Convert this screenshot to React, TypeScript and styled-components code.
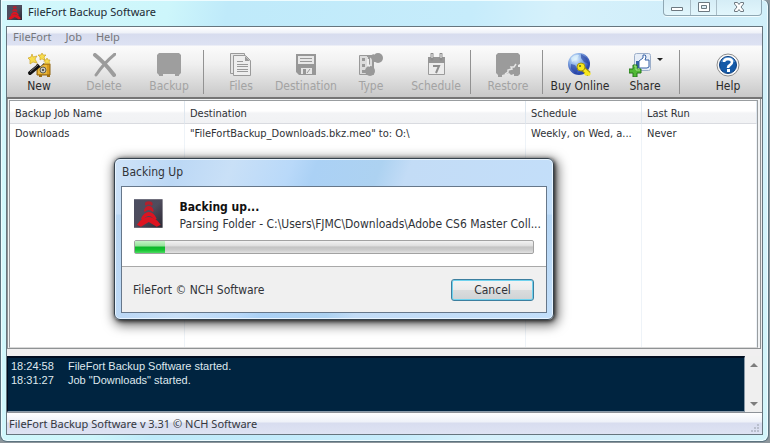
import React from 'react';
import styled, { createGlobalStyle } from 'styled-components';

const tahoma = `Tahoma, "DejaVu Sans Condensed", "Noto Sans", sans-serif`;
const segoe = `"Segoe UI", "Noto Sans", "Open Sans", sans-serif`;
const arial = `"Liberation Sans", Arial, sans-serif`;

const GlobalStyle = createGlobalStyle`
  *, *::before, *::after { box-sizing: border-box; }
  body { margin: 0; background: #8d969c; }
  button { font: inherit; color: inherit; border: 0; padding: 0; background: none; }
  svg { display: block; }
`;

const Window = styled.main`
  position: relative;
  display: flex;
  flex-direction: column;
  height: calc(100vh - 1px);
  margin-right: 1px;
  padding: 0 5px 6px;
  overflow: hidden;
  border: 1px solid #5d7480;
  border-top: 0;
  border-radius: 0 6px 7px 7px;
  box-shadow: inset 0 0 0 1px #eefcff;
  background: linear-gradient(100deg, #d3f8fc 0%, #cdf6fb 20%, #bfeafa 27%, #c6ecfb 56%, #d6f1fb 66%, #cfedfa 85%, #d3f5fa 100%);
`;

const TitleBar = styled.header`
  display: flex;
  flex: none;
  align-items: flex-start;
  height: 26px;
  padding: 0 1px 0 1px;
  font: 11px/24px ${segoe};
  color: #1d2a33;
`;

const Title = styled.h1`
  flex: 1;
  margin: 0 0 0 6px;
  font: inherit;
`;

const LogoSlot = styled.span`
  flex: none;
  margin-top: 5px;
`;

const WindowButtons = styled.div`
  display: flex;
  height: 16px;
  border: 1px solid #8fa7b3;
  border-top: 0;
  border-radius: 0 0 4px 4px;
  background: linear-gradient(#d5edf6, #e2f6fc);
  box-shadow: 0 1px 0 #f2fdff;
`;

const WindowButton = styled.button<{ $wide?: boolean }>`
  display: flex;
  justify-content: center;
  align-items: flex-start;
  width: ${p => (p.$wide ? 45 : 26)}px;
  & + & { border-left: 1px solid #a9bdc7; }
`;

const Client = styled.div`
  display: flex;
  flex: 1;
  flex-direction: column;
  min-height: 0;
  border: 1px solid #66757e;
  background: #f0eff0;
`;

const MenuBar = styled.nav`
  display: flex;
  flex: none;
  gap: 14px;
  height: 19px;
  padding-left: 6px;
  border-bottom: 1px solid #eceef6;
  background: linear-gradient(#ffffff 0, #eef1f8 6px, #d7dcee 7px, #dde2f3 100%);
  font: 11px/19px ${segoe};
  color: #75777c;
`;

const ToolBar = styled.div`
  display: flex;
  flex: none;
  height: 53px;
  padding-right: 1px;
  border-bottom: 2px solid #757575;
  background: linear-gradient(#fbfbfb, #f0f0f0 35%, #c8c8c8);
  font: 12px/14px ${tahoma};
`;

const Tool = styled.button<{ $last?: boolean }>`
  position: relative;
  display: flex;
  flex: none;
  flex-direction: column;
  align-items: center;
  gap: 2px;
  width: 65px;
  padding: 7px 1px 0 0;
  margin-left: ${p => (p.$last ? 'auto' : 0)};
  white-space: nowrap;
  color: #2b2b2b;
  &:disabled { color: #a3a3a3; }
`;

const ToolRule = styled.span`
  flex: none;
  width: 1px;
  height: 44px;
  margin: 4px 5px 0 1px;
  background: #929292;
`;

const DropArrow = styled.span`
  position: absolute;
  top: 12px;
  right: 15px;
  border: 3px solid transparent;
  border-top-color: #222;
  border-bottom: 0;
`;

const ListFrame = styled.section`
  flex: 1;
  min-height: 0;
  margin: 0 1px 0 0;
  padding: 1px 2px 0 1px;
  border: 1px solid #8f9294;
  border-top: 0;
  background: #f1f3f4;
`;

const JobTable = styled.table`
  width: 100%;
  height: 100%;
  border: 1px solid #999da0;
  border-bottom-color: #d8d8d8;
  border-collapse: separate;
  border-spacing: 0;
  table-layout: fixed;
  background: #fff;
  font: 11px/14px ${tahoma};
  color: #2f3236;
  th, td {
    overflow: hidden;
    padding: 0 5px;
    border-right: 1px solid #eef3f8;
    font-weight: normal;
    text-align: left;
    text-overflow: ellipsis;
    white-space: nowrap;
  }
  th {
    height: 23px;
    padding-top: 3px;
    border-right-color: #dfe7ef;
    border-bottom: 1px solid #d9dbe0;
    background: linear-gradient(#fff 45%, #f3f4f6 55%, #f1f2f4);
  }
`;

const Col = styled.col<{ $width?: number }>`
  width: ${p => (p.$width ? `${p.$width}px` : 'auto')};
`;

const JobRow = styled.tr`
  height: 20px;
`;

const LogPane = styled.section`
  display: flex;
  flex: none;
  height: 57px;
  margin-top: 7px;
  border-bottom: 1px solid #8d9298;
`;

const LogLines = styled.ol`
  flex: 1;
  margin: 0;
  padding: 1px 3px;
  border: 1px solid #000d20;
  border-top-width: 2px;
  border-bottom: 1px solid #8a9aa8;
  border-right-color: #8a9aa8;
  background: #002440;
  font: 11px/14px ${arial};
  color: #dfe8ee;
  list-style: none;
`;

const LogLine = styled.li`
  display: flex;
`;

const LogTime = styled.time`
  width: 57px;
`;

const ScrollBar = styled.div`
  display: flex;
  flex-direction: column;
  justify-content: space-between;
  width: 17px;
  padding: 7px 4px 6px 5px;
  background: #efefef;
`;

const ScrollButton = styled.button<{ $down?: boolean }>`
  width: 8px;
  height: 4px;
  border: 4px solid transparent;
  ${p => (p.$down ? 'border-top-color: #7d7d7d; border-bottom: 0;' : 'border-bottom-color: #7d7d7d; border-top: 0;')}
`;

const StatusBar = styled.footer`
  display: flex;
  flex: none;
  align-items: flex-end;
  justify-content: space-between;
  height: 21px;
  padding: 0 2px 1px;
  background: linear-gradient(#fff, #eef1f8 9px, #d8ddef 10px, #dee3f3);
  font: 11px/18px ${segoe};
  color: #35383e;
`;

const Dialog = styled.section`
  position: absolute;
  top: 158px;
  left: 113px;
  width: 440px;
  padding: 0 6px 6px;
  border: 1px solid #35424d;
  border-radius: 6px;
  background:
    linear-gradient(#ffffff00 55px, #8ebde644 56px, #ffffff00),
    linear-gradient(110deg, #cfe3f8 0%, #bcd8f5 13%, #c9e0f7 24%, #b9d9f9 36%, #abd1f5 41%, #add2f1 54%, #c3dcf6 60%, #c3dffa 100%);
  box-shadow: inset 0 0 0 1px #e8f4ff, 1px 1px 4px #000c, 2px 3px 12px 2px #0009;
  font: 12px/16px ${tahoma};
  color: #303338;
`;

const DialogTitle = styled.h2`
  height: 27px;
  margin: 0;
  padding-left: 1px;
  font: 12px/27px ${tahoma};
`;

const DialogBody = styled.div`
  border: 1px solid #66778a;
  background: #fff;
`;

const DialogMain = styled.div`
  padding: 12px 10px 12px 12px;
  border-bottom: 1px solid #a9a9a9;
`;

const Message = styled.div`
  display: flex;
  gap: 17px;
  margin-bottom: 7px;
`;

const MessageText = styled.div`
  min-width: 0;
  font: 12px/17px ${tahoma};
  white-space: nowrap;
`;

const MessageTitle = styled.strong`
  display: block;
  color: #111;
`;

const ProgressTrack = styled.div`
  height: 14px;
  margin-right: 2px;
  border: 1px solid #a2a2a2;
  border-radius: 2px;
  background: linear-gradient(#f2f2f2, #dfdfdf 40%, #c3c3c3 50%, #cdcdcd 75%, #e2e2e2);
`;

const ProgressFill = styled.div`
  height: 100%;
  background: linear-gradient(#c4f3c8, #93e398 42%, #0db52a 50%, #14c330 75%, #4ddb62);
`;

const DialogFooter = styled.div`
  display: flex;
  align-items: center;
  justify-content: space-between;
  height: 45px;
  padding: 0 12px 0 11px;
  background: #f0f0f0;
`;

const CancelButton = styled.button`
  width: 83px;
  height: 22px;
  border: 1px solid #3c7f9f;
  border-radius: 3px;
  background: linear-gradient(#f3f3f3, #ebebeb 48%, #dadcdd 52%, #cfd3d5);
  box-shadow: inset 0 0 0 1px #6fd2ee;
`;

const Logo = ({ size }: { size: number }) => (
  <svg width={size} height={size} viewBox="0 0 29 29" aria-hidden="true">
    <defs>
      <linearGradient id="logoBack" x2="1" y2="1">
        <stop stopColor="#4b4e62" />
        <stop offset=".5" stopColor="#4f4c5c" />
        <stop offset="1" stopColor="#2a2833" />
      </linearGradient>
    </defs>
    <path d="M0 0h29v29H0z" fill="url(#logoBack)" />
    <g fill="#dd1420">
      <path d="M11 5q0-3 4-3t4 3l-1 2q-3-3-6 0z" fill="#b3202c" />
      <path d="M10 12q1-5 5-5t5 5l-1 1q-4-4-8 0z" fill="#c71a26" />
      <path d="M7 20q3-7 8-7t8 7l-2 1q-3-4-6-4t-6 4z" />
      <path d="M3 26l3-4q5-4 9-4t9 4l3 4-4 2-8-5-8 5z" />
    </g>
  </svg>
);

const NewIcon = () => (
  <svg width="24" height="24" viewBox="0 0 24 24" aria-hidden="true">
    <path d="M10 11h13v11H10z" fill="#d99b1c" stroke="#8d630e" />
    <path d="M11 12h9v9h-9z" fill="#e9b83c" />
    <path d="M12 22h3v2h-3zM20 22h3v2h-3z" fill="#9a6c12" />
    <circle cx="16" cy="17" r="3" fill="#c9c9bd" stroke="#5d5c54" />
    <circle cx="16" cy="17" r="1" fill="#333" />
    <path d="M5 1l1 3 4-1-2 3 2 4-4-1-3 2V7L1 5l3-1z" fill="#f8dd4e" stroke="#cda526" strokeWidth=".7" />
    <path d="M15 0l1 2 3 0-2 2 1 3-3-1-2 1V4l-2-2h3z" fill="#f8dd4e" stroke="#cda526" strokeWidth=".7" />
    <path d="M20 5l1 2h2l-1 2 1 2-3-1-2 1V9l-1-2h2z" fill="#f8dd4e" stroke="#cda526" strokeWidth=".7" />
    <path d="M3 20L15 10" stroke="#111" strokeWidth="4" strokeLinecap="round" />
    <path d="M12 12l4-4" stroke="#f4f4f4" strokeWidth="4" />
    <path d="M3 19l8-7" stroke="#777" />
  </svg>
);

const DeleteIcon = () => (
  <svg width="24" height="24" viewBox="0 0 24 24" aria-hidden="true">
    <path d="M3 2q9 7 19 20" stroke="#9c9c9c" strokeWidth="4" fill="none" strokeLinecap="round" />
    <path d="M23 1Q12 10 4 22" stroke="#9c9c9c" strokeWidth="3" fill="none" strokeLinecap="round" />
  </svg>
);

const BackupIcon = () => (
  <svg width="24" height="24" viewBox="0 0 24 24" aria-hidden="true">
    <path d="M2 0h20l2 2v18l-2 2v1h-4v-2H6v2H2v-1l-2-2V2z" fill="#9e9e9e" />
  </svg>
);

const FilesIcon = () => (
  <svg width="24" height="24" viewBox="0 0 24 24" aria-hidden="true">
    <path d="M4.500 20.500h-3v-20h14v2" fill="#e5e5e5" stroke="#9a9a9a" />
    <path d="M4.500 2.500h12l5 5v15h-17z" fill="#eee" stroke="#9a9a9a" />
    <path d="M16 3l5 5h-5z" fill="#9a9a9a" />
    <path d="M8 8.500h6M8 11.500h11M8 13.500h11M8 16.500h11M8 18.500h11" stroke="#9a9a9a" />
  </svg>
);

const DestinationIcon = () => (
  <svg width="24" height="24" viewBox="0 0 24 24" aria-hidden="true">
    <path d="M2 1h20v21H5l-3-3z" fill="#979797" />
    <path d="M4 3h16v8H4z" fill="#e7e7e7" />
    <path d="M6 5.500h12M6 8.500h12" stroke="#999" />
    <path d="M7 15h11v6H7z" fill="#e5e5e5" />
    <path d="M9 16h3v5H9z" fill="#979797" />
    <path d="M13 20l3-4" stroke="#979797" />
  </svg>
);

const TypeIcon = () => (
  <svg width="24" height="24" viewBox="0 0 24 24" aria-hidden="true">
    <path d="M.5 2.500h14v19H.5z" fill="#dcdcdc" stroke="#999" />
    <path d="M3 5h3v3H3zM3 11h3v3H3zM3 17h4v3H3z" fill="#999" />
    <path d="M8 3h2v10M11 4l4-2" stroke="#999" strokeWidth="2" fill="none" />
    <path d="M11 3l9 1v4l-5 1v9h-2V7z" fill="#999" />
    <circle cx="19" cy="5" r="5" fill="#999" />
    <circle cx="11" cy="18" r="5" fill="#999" />
    <path d="M9 6v6l2 1" stroke="#eee" strokeWidth="2" fill="none" />
  </svg>
);

const ScheduleIcon = () => (
  <svg width="24" height="24" viewBox="0 0 24 24" aria-hidden="true">
    <path d="M4.500 5.500h16v16h-16z" fill="#ececec" stroke="#9b9b9b" />
    <path d="M4 4h17v6H4z" fill="#969696" />
    <path d="M8 1v5M17 1v5" stroke="#8d8d8d" strokeWidth="3" strokeLinecap="round" />
    <path d="M8 1v4M17 1v4" stroke="#eee" />
    <path d="M9 13h6l-3 7" stroke="#8d8d8d" strokeWidth="2" fill="none" />
  </svg>
);

const RestoreIcon = () => (
  <svg width="24" height="24" viewBox="0 0 24 24" aria-hidden="true">
    <path d="M2 0h20l2 2v9l-2 1v2h2v7l-2 2h-4v-2l-3 1-2-2-7 2v2H2v-2l-2-2V2z" fill="#9b9b9b" />
    <path d="M20 11l-2 3h-3l1 2-4 1v2l-3 2" stroke="#e6e6e6" fill="none" strokeWidth="1.500" />
  </svg>
);

const BuyIcon = () => (
  <svg width="24" height="24" viewBox="0 0 24 24" aria-hidden="true">
    <defs>
      <radialGradient id="globe" cx=".35" cy=".28" r=".65">
        <stop stopColor="#e6f6ff" />
        <stop offset=".45" stopColor="#8db2e8" />
        <stop offset="1" stopColor="#2a49ae" />
      </radialGradient>
    </defs>
    <circle cx="11" cy="11" r="11" fill="url(#globe)" />
    <path d="M13 1l6 4 2 6-5-2-3-4zM3 11l4 1 3 5-2 4-5-5z" fill="#243f9e" opacity=".6" />
    <path d="M3 5q4-4 8-3l-2 4-5 3z" fill="#dff4fb" opacity=".7" />
    <path d="M14 15l7 6" stroke="#a08f08" strokeWidth="5" />
    <path d="M14 15l8 7M19 20l-2 2" stroke="#f8e81c" strokeWidth="3" />
    <circle cx="13" cy="14" r="4" fill="#f8e81c" stroke="#a39412" />
    <circle cx="12" cy="13" r="1" fill="#52612e" />
  </svg>
);

const ShareIcon = () => (
  <svg width="32" height="24" viewBox="4 0 32 24" aria-hidden="true">
    <rect x="9.500" y=".5" width="16" height="17" rx="2" fill="#e6edf7" stroke="#9caec9" />
    <path d="M11 8h3v7h-3z" fill="#3561a5" />
    <path d="M14 8l4-3V2q3-1 3 2l-1 3h4v7l-2 1h-8z" fill="#fff" stroke="#3561a5" />
    <path d="M8 12h4v4h4v4h-4v4H8v-4H4v-4h4z" fill="#52b936" stroke="#25771b" />
    <path d="M9 13h2v4h4" stroke="#a6e78a" fill="none" />
  </svg>
);

const HelpIcon = () => (
  <svg width="24" height="24" viewBox="0 0 24 24" aria-hidden="true">
    <circle cx="12" cy="12" r="11" fill="#f8f8f8" stroke="#8c8c8c" />
    <circle cx="12" cy="12" r="8.500" fill="#145aa8" stroke="#0b3e80" />
    <path d="M5 9q2-5 7-5t7 5q-7-3-14 0z" fill="#5f9bd9" />
    <path d="M8 9q0-3 4-3t4 3q0 2-2 3t-2 3" stroke="#fff" strokeWidth="2.600" fill="none" />
    <path d="M11 16h3v3h-3z" fill="#fff" />
  </svg>
);

const tools = [
  [
    { label: 'New', Icon: NewIcon, enabled: true },
    { label: 'Delete', Icon: DeleteIcon },
    { label: 'Backup', Icon: BackupIcon },
  ],
  [
    { label: 'Files', Icon: FilesIcon },
    { label: 'Destination', Icon: DestinationIcon },
    { label: 'Type', Icon: TypeIcon },
    { label: 'Schedule', Icon: ScheduleIcon },
  ],
  [{ label: 'Restore', Icon: RestoreIcon }],
  [
    { label: 'Buy Online', Icon: BuyIcon, enabled: true },
    { label: 'Share', Icon: ShareIcon, enabled: true, menu: true },
  ],
] as { label: string; Icon: React.FC; enabled?: boolean; menu?: boolean }[][];

const MenuItem = styled.button``;

const log = [
  ['18:24:58', 'FileFort Backup Software started.'],
  ['18:31:27', 'Job "Downloads" started.'],
];

const progress = 7.5;

export default function App() {
  return (
    <>
      <GlobalStyle />
      <Window>
        <TitleBar>
          <LogoSlot><Logo size={15} /></LogoSlot>
          <Title>FileFort Backup Software</Title>
          <WindowButtons>
            <WindowButton aria-label="Minimize">
              <svg width="14" height="14" viewBox="0 0 14 14">
                <path d="M1.500 7.500h11v3h-11z" fill="#fff" stroke="#6d7880" />
              </svg>
            </WindowButton>
            <WindowButton aria-label="Maximize">
              <svg width="14" height="14" viewBox="0 0 14 14">
                <path d="M1.500 2.500h11v9h-11z" fill="#fff" stroke="#6d7880" />
                <path d="M4.500 5.500h5v3h-5z" fill="#dcecf3" stroke="#6d7880" />
              </svg>
            </WindowButton>
            <WindowButton $wide aria-label="Close">
              <svg width="14" height="14" viewBox="0 0 14 14">
                <path d="M2.500 2.500h3L7 4.500l1.500-2h3v1.500L9 7l2.500 3v1.500h-3L7 9.500l-1.500 2h-3V10L5 7 2.500 4z" fill="#fff" stroke="#6d7880" />
              </svg>
            </WindowButton>
          </WindowButtons>
        </TitleBar>

        <Client>
          <MenuBar>
            <MenuItem>FileFort</MenuItem>
            <MenuItem>Job</MenuItem>
            <MenuItem>Help</MenuItem>
          </MenuBar>

          <ToolBar>
            {tools.map((group, i) => (
              <React.Fragment key={i}>
                {group.map(({ label, Icon, enabled, menu }) => (
                  <Tool key={label} disabled={!enabled}>
                    <Icon />
                    {label}
                    {menu && <DropArrow />}
                  </Tool>
                ))}
                <ToolRule />
              </React.Fragment>
            ))}
            <Tool $last>
              <HelpIcon />
              Help
            </Tool>
          </ToolBar>

          <ListFrame>
            <JobTable>
              <colgroup>
                <Col $width={175} />
                <Col $width={341} />
                <Col $width={116} />
                <Col />
              </colgroup>
              <thead>
                <tr>
                  <th>Backup Job Name</th>
                  <th>Destination</th>
                  <th>Schedule</th>
                  <th>Last Run</th>
                </tr>
              </thead>
              <tbody>
                <JobRow>
                  <td>Downloads</td>
                  <td>"FileFortBackup_Downloads.bkz.meo" to: O:\</td>
                  <td>Weekly, on Wed, a...</td>
                  <td>Never</td>
                </JobRow>
                <tr><td /><td /><td /><td /></tr>
              </tbody>
            </JobTable>
          </ListFrame>

          <LogPane>
            <LogLines>
              {log.map(([time, text]) => (
                <LogLine key={time}>
                  <LogTime>{time}</LogTime>
                  {text}
                </LogLine>
              ))}
            </LogLines>
            <ScrollBar>
              <ScrollButton aria-label="Scroll up" />
              <ScrollButton $down aria-label="Scroll down" />
            </ScrollBar>
          </LogPane>

          <StatusBar>
            FileFort Backup Software v 3.31 © NCH Software
            <svg width="9" height="9" viewBox="0 0 9 9" aria-hidden="true">
              <path d="M6 0h2v2H6zM3 3h2v2H3zM6 3h2v2H6zM0 6h2v2H0zM3 6h2v2H3zM6 6h2v2H6z" fill="#b9bfcd" />
            </svg>
          </StatusBar>
        </Client>

        <Dialog role="dialog" aria-labelledby="dialog-title">
          <DialogTitle id="dialog-title">Backing Up</DialogTitle>
          <DialogBody>
            <DialogMain>
              <Message>
                <Logo size={29} />
                <MessageText>
                  <MessageTitle>Backing up...</MessageTitle>
                  Parsing Folder - C:\Users\FJMC\Downloads\Adobe CS6 Master Coll...
                </MessageText>
              </Message>
              <ProgressTrack role="progressbar" aria-label="Backup progress" aria-valuenow={progress}>
                <ProgressFill style={{ width: `${progress}%` }} />
              </ProgressTrack>
            </DialogMain>
            <DialogFooter>
              FileFort © NCH Software
              <CancelButton>Cancel</CancelButton>
            </DialogFooter>
          </DialogBody>
        </Dialog>
      </Window>
    </>
  );
}
